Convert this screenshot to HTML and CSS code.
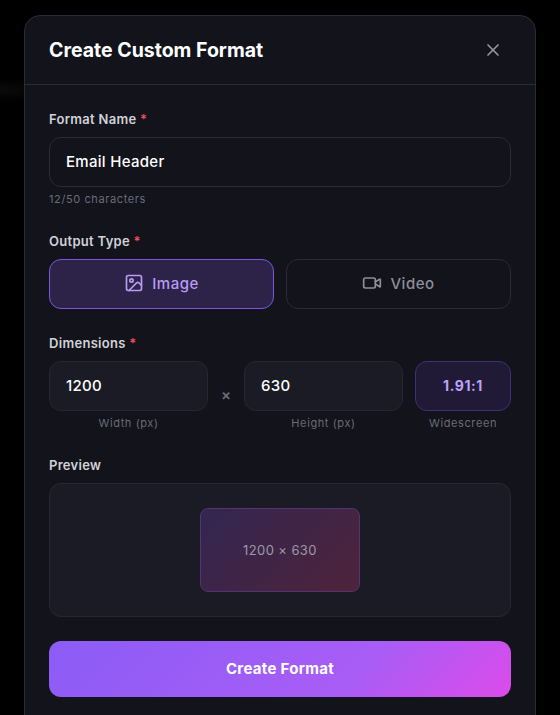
FILE: index.html
```html
<!DOCTYPE html>
<html lang="en">
  <head>
    <meta charset="UTF-8" />
    <title>Create Custom Format</title>
    <link rel="stylesheet" href="styles.css">
  </head>
  <body>
    <div class="modal">
      <div class="modal-header">
        <h2>Create Custom Format</h2>
        <button class="close-btn" aria-label="Close">
          <svg width="20" height="20" viewBox="0 0 24 24" fill="none" stroke="currentColor" stroke-width="2" stroke-linecap="round" stroke-linejoin="round">
            <path d="M18 6 6 18" />
            <path d="m6 6 12 12" />
          </svg>
        </button>
      </div>

      <div class="modal-body">
        <!-- Name -->
        <div class="field field-name">
          <label class="field-label">Format Name <span class="required">*</span></label>
          <div class="input input-outline">Email Header</div>
          <div class="hint">12/50 characters</div>
        </div>

        <!-- Type -->
        <div class="field field-type">
          <label class="field-label">Output Type <span class="required">*</span></label>
          <div class="type-row">
            <button class="type-btn active">
              <svg width="20" height="20" viewBox="0 0 24 24" fill="none" stroke="currentColor" stroke-width="2" stroke-linecap="round" stroke-linejoin="round">
                <rect x="3" y="3" width="18" height="18" rx="2" />
                <circle cx="9" cy="9" r="2" />
                <path d="m21 15-3.086-3.086a2 2 0 0 0-2.828 0L6 21" />
              </svg>
              Image
            </button>
            <button class="type-btn">
              <svg width="20" height="20" viewBox="0 0 24 24" fill="none" stroke="currentColor" stroke-width="2" stroke-linecap="round" stroke-linejoin="round">
                <path d="m16 13 5.223 3.482a.5.5 0 0 0 .777-.416V7.87a.5.5 0 0 0-.752-.432L16 10.5" />
                <rect x="2" y="6" width="14" height="12" rx="2" />
              </svg>
              Video
            </button>
          </div>
        </div>

        <!-- Dimensions -->
        <div class="field field-dims">
          <label class="field-label">Dimensions <span class="required">*</span></label>
          <div class="dims-row">
            <div class="dim">
              <div class="input input-filled">1200</div>
              <div class="dim-caption">Width (px)</div>
            </div>
            <span class="times">×</span>
            <div class="dim">
              <div class="input input-filled">630</div>
              <div class="dim-caption">Height (px)</div>
            </div>
            <div class="ratio">
              <div class="ratio-box">1.91:1</div>
              <div class="dim-caption">Widescreen</div>
            </div>
          </div>
        </div>

        <!-- Preview -->
        <div class="field field-preview">
          <label class="field-label">Preview</label>
          <div class="preview-box">
            <div class="preview-thumb">1200 × 630</div>
          </div>
        </div>

        <button class="submit-btn">Create Format</button>
      </div>
    </div>
  </body>
</html>
```

FILE: styles.css
```css
* {
  box-sizing: border-box;
}

html,
body {
  height: 715px;
  overflow: hidden;
}

body {
  margin: 0;
  padding: 15px 24px 0;
  background: radial-gradient(ellipse 60px 12px at 0 90px, #0b0b0c, #000);
  font-family: Inter, "Liberation Sans", sans-serif;
  color: #fff;
}

.modal {
  width: 512px;
  height: 720px;
  background-color: #12131b;
  border: 1px solid #2a2b38;
  border-radius: 16px;
}

.modal-header {
  height: 69px;
  display: flex;
  align-items: center;
  justify-content: space-between;
  padding: 0 24px;
  border-bottom: 1px solid #2a2b38;
}

.modal-header h2 {
  margin: 0;
  font-size: 19.5px;
  font-weight: 700;
  line-height: 28px;
}

.close-btn {
  display: flex;
  padding: 0;
  margin-right: 8px;
  background: none;
  border: none;
  color: #9496a1;
}

.modal-body {
  padding: 24px 24px 0;
}

.field-label {
  display: block;
  font-size: 13px;
  font-weight: 600;
  line-height: 20px;
  letter-spacing: 0.3px;
  color: #d1d2d8;
}

.required {
  color: #ef4f5c;
}

.field-name .field-label {
  margin-bottom: 8px;
}

.input {
  height: 50px;
  display: flex;
  align-items: center;
  padding: 0 16px 2px;
  border-radius: 12px;
  font-size: 15px;
  font-weight: 500;
  letter-spacing: 0.3px;
  color: #fff;
}

.input-outline {
  border: 1px solid #2a2b38;
}

.input-filled {
  background-color: #1a1b24;
  border: 1px solid #262733;
}

.hint {
  margin-top: 4px;
  font-size: 11px;
  line-height: 16px;
  letter-spacing: 0.6px;
  color: #6a6c78;
}

.field-type {
  margin-top: 24px;
}

.field-type .field-label,
.field-dims .field-label,
.field-preview .field-label {
  margin-bottom: 8px;
}

.type-row {
  display: grid;
  grid-template-columns: 1fr 1fr;
  gap: 12px;
}

.type-btn {
  height: 50px;
  display: flex;
  align-items: center;
  justify-content: center;
  gap: 8px;
  padding: 0 0 2px;
  background: none;
  border: 1px solid #2a2b38;
  border-radius: 12px;
  font-family: inherit;
  font-size: 15px;
  font-weight: 500;
  letter-spacing: 0.5px;
  color: #8d8f9a;
}

.type-btn.active {
  background-color: #2d2348;
  border-color: #7c55e0;
  color: #b79cf5;
}

.field-dims {
  margin-top: 24px;
}

.dims-row {
  display: flex;
  gap: 12px;
}

.dim {
  flex: 1;
}

.times {
  width: 12px;
  height: 50px;
  padding-top: 22px;
  text-align: center;
  font-size: 15px;
  font-weight: 600;
  line-height: 24px;
  color: #6a6c78;
}

.ratio {
  width: 96px;
}

.ratio-box {
  height: 50px;
  display: flex;
  align-items: center;
  justify-content: center;
  padding-bottom: 2px;
  background-color: #211a36;
  border: 1px solid #3f2f73;
  border-radius: 12px;
  font-size: 14px;
  font-weight: 700;
  letter-spacing: 0.6px;
  color: #bba3f8;
}

.dim-caption {
  margin-top: 4px;
  text-align: center;
  font-size: 11px;
  line-height: 16px;
  letter-spacing: 0.6px;
  color: #6a6c78;
}

.field-preview {
  margin-top: 24px;
}

.preview-box {
  height: 134px;
  display: flex;
  align-items: center;
  justify-content: center;
  background-color: #1a1b24;
  border: 1px solid #262733;
  border-radius: 12px;
}

.preview-thumb {
  width: 160px;
  height: 84px;
  display: flex;
  align-items: center;
  justify-content: center;
  background: linear-gradient(135deg, #322650, #4f233b);
  border: 1px solid #533471;
  border-radius: 8px;
  font-size: 13px;
  letter-spacing: 0.4px;
  color: #9b99a8;
}

.submit-btn {
  display: block;
  width: 100%;
  height: 56px;
  margin-top: 24px;
  padding: 0 0 2px;
  background: linear-gradient(135deg, #8b5cf6 0%, #a85df6 65%, #dc4bea 100%);
  border: none;
  border-radius: 12px;
  font-family: inherit;
  font-size: 15px;
  font-weight: 700;
  letter-spacing: 0.3px;
  color: #fff;
}
```
